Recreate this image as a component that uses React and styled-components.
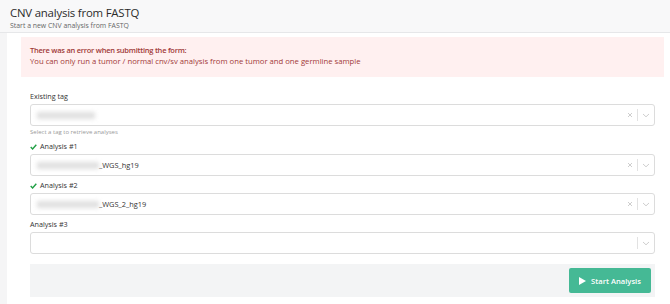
import React from 'react';
import styled, { createGlobalStyle } from 'styled-components';

const GlobalStyle = createGlobalStyle`
  html, body {
    margin: 0;
    padding: 0;
    background: #ffffff;
    font-family: "Open Sans", "Noto Sans", sans-serif;
    color: #333;
  }
`;

const Page = styled.div`
  width: 670px;
  height: 304px;
  overflow: hidden;
  display: flex;
  flex-direction: column;
`;

const Header = styled.header`
  height: 33px;
  background: #f8f8f9;
  border-bottom: 1px solid #e6e7e9;
  padding: 4px 10px 0;
  box-sizing: border-box;
`;

const Title = styled.h1`
  margin: 0;
  font-size: 11.4px;
  font-weight: 400;
  letter-spacing: -0.2px;
  line-height: 17px;
  color: #2b2b2b;
`;

const Subtitle = styled.div`
  font-size: 6.9px;
  line-height: 10px;
  color: #666;
`;

const Body = styled.div`
  flex: 1;
  display: flex;
`;

const Strip = styled.div`
  width: 7px;
  background: #f5f5f6;
`;

const Content = styled.main`
  flex: 1;
  padding: 4px 6px 0 14px;
`;

const ErrorBox = styled.div`
  background: #fff0f0;
  padding: 8px 9px;
  height: 40px;
  box-sizing: border-box;
  color: #9f3a38;
  font-size: 7.7px;
  line-height: 11px;
`;

const ErrorTitle = styled.div`
  font-weight: 600;
  font-size: 7.5px;
  letter-spacing: -0.25px;
`;

const Form = styled.form`
  margin: 14px 9px 0;
  display: flex;
  flex-direction: column;
`;

const Field = styled.div`
  display: flex;
  flex-direction: column;
  margin-bottom: 4px;
`;

const Label = styled.label`
  display: flex;
  align-items: center;
  gap: 3px;
  font-size: 7.2px;
  line-height: 11px;
  color: #333;
  margin-bottom: 2px;
`;

const Select = styled.div`
  height: 22px;
  box-sizing: border-box;
  border: 1px solid #dcdcdc;
  border-radius: 3px;
  background: #fff;
  display: flex;
  align-items: center;
  padding-left: 6px;
  font-size: 7.4px;
  color: #333;
`;

const Value = styled.div`
  flex: 1;
  display: flex;
  align-items: center;
`;

const Blur = styled.span`
  display: inline-block;
  width: ${p => p.$w}px;
  height: 7px;
  background: #d6d6d6;
  filter: blur(2px);
  opacity: 0.75;
`;

const Indicators = styled.div`
  display: flex;
  align-items: center;
  height: 100%;
  padding-right: 4px;
`;

const Divider = styled.span`
  width: 1px;
  height: 12px;
  background: #e2e2e2;
  margin: 0 4px;
`;

const Hint = styled.div`
  font-size: 6px;
  line-height: 10px;
  color: #9a9a9a;
  margin-top: 1px;
`;

const Footer = styled.div`
  margin-top: 6px;
  height: 33px;
  background: #f3f4f5;
  display: flex;
  justify-content: flex-end;
  align-items: center;
  padding: 0 4px;
`;

const Button = styled.button`
  height: 25px;
  width: 82px;
  border: none;
  border-radius: 2px;
  background: #45b995;
  color: #fff;
  font-family: inherit;
  font-size: 7.6px;
  font-weight: 600;
  display: flex;
  align-items: center;
  justify-content: center;
  gap: 5px;
  padding: 0;
`;

const Check = () => (
  <svg width="7" height="6" viewBox="0 0 7 6">
    <polyline points="0.7,3 2.6,5 6.3,0.8" fill="none" stroke="#21a045" strokeWidth="1.4" />
  </svg>
);

const Clear = () => (
  <svg width="6" height="6" viewBox="0 0 6 6">
    <path d="M1 1L5 5M5 1L1 5" stroke="#c8c8c8" strokeWidth="0.9" />
  </svg>
);

const Chevron = () => (
  <svg width="8" height="5" viewBox="0 0 8 5">
    <polyline points="1,1 4,3.8 7,1" fill="none" stroke="#c8c8c8" strokeWidth="0.9" />
  </svg>
);

const Play = () => (
  <svg width="7" height="8" viewBox="0 0 7 8">
    <polygon points="0,0 7,4 0,8" fill="#fff" />
  </svg>
);

const SelectBox = ({ children, clearable }) => (
  <Select>
    <Value>{children}</Value>
    <Indicators>
      {clearable && <Clear />}
      <Divider />
      <Chevron />
    </Indicators>
  </Select>
);

export default function App() {
  return (
    <Page>
      <GlobalStyle />
      <Header>
        <Title>CNV analysis from FASTQ</Title>
        <Subtitle>Start a new CNV analysis from FASTQ</Subtitle>
      </Header>
      <Body>
        <Strip />
        <Content>
          <ErrorBox>
            <ErrorTitle>There was an error when submitting the form:</ErrorTitle>
            <div>You can only run a tumor / normal cnv/sv analysis from one tumor and one germline sample</div>
          </ErrorBox>
          <Form>
            <Field>
              <Label>Existing tag</Label>
              <SelectBox clearable>
                <Blur $w={58} />
              </SelectBox>
              <Hint>Select a tag to retrieve analyses</Hint>
            </Field>
            <Field>
              <Label><Check />Analysis #1</Label>
              <SelectBox clearable>
                <Blur $w={62} />
                <span>_WGS_hg19</span>
              </SelectBox>
            </Field>
            <Field>
              <Label><Check />Analysis #2</Label>
              <SelectBox clearable>
                <Blur $w={62} />
                <span>_WGS_2_hg19</span>
              </SelectBox>
            </Field>
            <Field>
              <Label>Analysis #3</Label>
              <SelectBox />
            </Field>
            <Footer>
              <Button type="button"><Play />Start Analysis</Button>
            </Footer>
          </Form>
        </Content>
      </Body>
    </Page>
  );
}
